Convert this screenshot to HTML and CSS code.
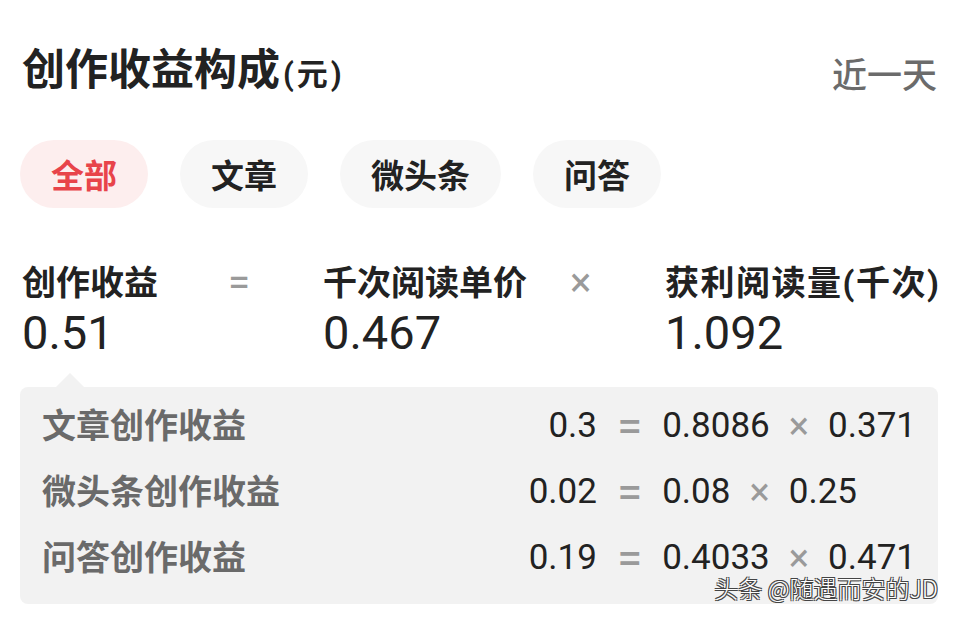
FILE: index.html
```html
<!DOCTYPE html>
<html lang="zh-CN">
<head>
    <meta charset="UTF-8">
    <meta name="viewport" content="width=device-width, initial-scale=1.0">
    <title>创作收益构成</title>
    <link rel="stylesheet" href="styles.css">
</head>
<body>
    <div class="page">
        <div class="header">
            <h1>创作收益构成<span class="unit">(元)</span></h1>
            <span class="range">近一天</span>
        </div>

        <div class="tabs">
            <span class="tab active">全部</span>
            <span class="tab">文章</span>
            <span class="tab">微头条</span>
            <span class="tab">问答</span>
        </div>

        <div class="formula">
            <div class="f-label">创作收益</div>
            <div class="f-op">=</div>
            <div class="f-label">千次阅读单价</div>
            <div class="f-op">×</div>
            <div class="f-label wide">获利阅读量(千次)</div>
            <div class="f-value">0.51</div>
            <div></div>
            <div class="f-value">0.467</div>
            <div></div>
            <div class="f-value">1.092</div>
        </div>

        <div class="detail">
            <div class="d-name">文章创作收益</div>
            <div class="d-total">0.3</div>
            <div class="d-eq">=</div>
            <div class="d-calc"><span>0.8086</span><span class="d-x">×</span><span>0.371</span></div>

            <div class="d-name">微头条创作收益</div>
            <div class="d-total">0.02</div>
            <div class="d-eq">=</div>
            <div class="d-calc"><span>0.08</span><span class="d-x">×</span><span>0.25</span></div>

            <div class="d-name">问答创作收益</div>
            <div class="d-total">0.19</div>
            <div class="d-eq">=</div>
            <div class="d-calc"><span>0.4033</span><span class="d-x">×</span><span>0.471</span></div>
        </div>

        <div class="watermark">头条 @随遇而安的JD</div>
    </div>
</body>
</html>
```

FILE: styles.css
```css
body { margin: 0; background: #fff; font-family: Roboto, "Noto Sans CJK SC", sans-serif; color: #222; }
.page { position: relative; width: 918px; height: 617px; padding: 0 18px 0 20px; overflow: hidden; }

.header { display: flex; justify-content: space-between; align-items: center; padding-top: 44px; height: 56px; }
.header h1 { margin: 0 0 0 2px; font-size: 43px; font-weight: bold; line-height: 56px; }
.header .unit { font-size: 31px; font-weight: bold; margin-left: 3px; letter-spacing: 3px; }
.range { font-size: 35px; font-weight: 500; color: #6b6b6b; margin-right: 1px; }

.tabs { display: flex; gap: 32px; margin-top: 40px; }
.tab {
    display: flex;
    align-items: center;
    height: 68px;
    padding: 0 31px;
    border-radius: 34px;
    background-color: #f7f7f7;
    font-size: 33px;
    font-weight: bold;
}
.tab.active { background-color: #fdeeee; color: #e8444a; }

.formula {
    display: grid;
    grid-template-columns: 206px 95px 247px 95px auto;
    margin: 53px 0 0 2px;
}
.f-label { font-size: 34px; font-weight: bold; line-height: 44px; white-space: nowrap; }
.f-label.wide { letter-spacing: 1.5px; }
.f-op { font-size: 40px; color: #9a9a9a; line-height: 44px; }
.f-value { font-size: 47px; line-height: 56px; color: #222; }

.detail {
    position: relative;
    display: grid;
    grid-template-columns: 1fr auto auto auto;
    column-gap: 20px;
    margin-top: 26px;
    padding: 6px 22px 13px 22px;
    background-color: #f2f2f2;
    border-radius: 8px;
}
.detail::before {
    content: "";
    position: absolute;
    top: -14px;
    left: 36px;
    border-left: 14px solid transparent;
    border-right: 14px solid transparent;
    border-bottom: 14px solid #f2f2f2;
}
.detail > div { padding: 16px 0; line-height: 34px; }
.d-name { font-size: 34px; font-weight: bold; color: #6a6a6a; }
.d-total, .d-calc { font-size: 35px; color: #222; }
.d-total { text-align: right; }
.d-calc { display: flex; gap: 19px; }
.d-eq { font-size: 46px; color: #9a9a9a; }
.d-x { font-size: 38px; color: #9a9a9a; }

.watermark {
    position: absolute;
    right: 18px;
    bottom: 17px;
    font-size: 24px;
    line-height: 24px;
    color: #fff;
    font-family: "Noto Sans CJK SC", sans-serif;
    font-weight: 300;
    text-shadow: -1px -1px 0 #444, 1px -1px 0 #444, -1px 1px 0 #444, 1px 1px 0 #444;
}
```
